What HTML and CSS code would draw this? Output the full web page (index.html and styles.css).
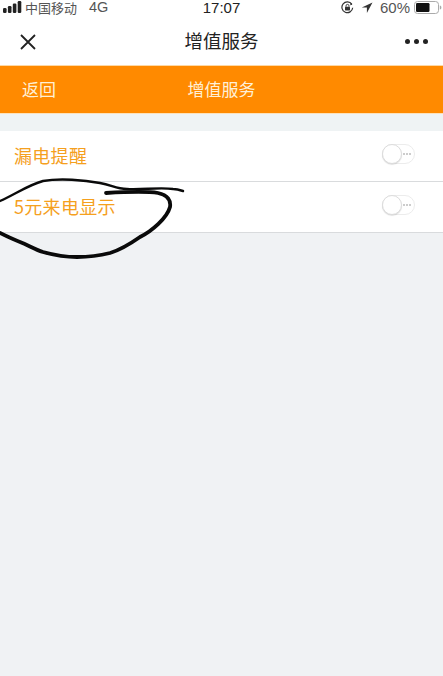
FILE: index.html
```html
<!DOCTYPE html>
<html lang="zh">
<head>
<meta charset="utf-8">
<title>增值服务</title>
<link rel="stylesheet" href="styles.css">
</head>
<body>
<div class="page">
  <div class="status">
    <div class="status-left">
      <svg class="signal" width="19" height="12" viewBox="0 0 19 12"><rect x="0" y="7" width="3.600" height="5" rx="1.200"/><rect x="4.900" y="5" width="3.600" height="7" rx="1.200"/><rect x="9.800" y="2.500" width="3.600" height="9.500" rx="1.200"/><rect x="14.700" y="0" width="3.600" height="12" rx="1.200"/></svg>
      <span class="carrier">中国移动</span>
      <span class="net">4G</span>
    </div>
    <div class="time">17:07</div>
    <div class="status-right">
      <svg class="lock" width="13" height="13" viewBox="0 0 13 13"><path d="M10.800 3.200A5.400 5.400 0 1 0 11.700 6.800" fill="none" stroke="#333" stroke-width="1.200"/><path d="M9.800 1.800l1.600 2-2.300.5z" fill="#333"/><rect x="4" y="5.800" width="5" height="3.600" rx=".6" fill="#333"/><path d="M5 5.800V4.900a1.500 1.500 0 0 1 3 0v.9" fill="none" stroke="#333" stroke-width=".9"/></svg>
      <svg class="arrow" width="12" height="12" viewBox="0 0 12 12"><path d="M11.500.5L.8 5.600h5.100v5.400z" fill="#333"/></svg>
      <span class="pct">60%</span>
      <svg class="battery" width="28" height="13" viewBox="0 0 28 13"><rect x=".5" y=".5" width="24" height="12" rx="3" fill="#fff" stroke="#aaa"/><rect x="2" y="2" width="13.500" height="9" rx="1.200" fill="#111"/><path d="M25.800 4.500v4c1 0 1.600-1 1.600-2s-.6-2-1.600-2z" fill="#aaa"/></svg>
    </div>
  </div>

  <header class="nav">
    <svg class="close" width="18" height="18" viewBox="0 0 18 18"><path d="M2 2l14 14M16 2L2 16" stroke="#222" stroke-width="1.800" fill="none"/></svg>
    <div class="nav-title">增值服务</div>
    <div class="dots"><i></i><i></i><i></i></div>
  </header>

  <div class="banner">
    <span class="back">返回</span>
    <span class="banner-title">增值服务</span>
  </div>

  <div class="gap"></div>

  <div class="row">
    <span class="label">漏电提醒</span>
    <span class="switch"><span class="knob"></span><span class="more"><i></i><i></i><i></i></span></span>
  </div>
  <div class="row">
    <span class="label">5元来电显示</span>
    <span class="switch"><span class="knob"></span><span class="more"><i></i><i></i><i></i></span></span>
  </div>

  <svg class="scribble" width="190" height="85" viewBox="0 0 190 85">
    <path d="M0 24C14 18 28 8 43 4C60 1 84 3 100 6C112 8 116 12 127 12C142 13 160 10 173 12C177 12 180 13 183 14" fill="none" stroke="#0a0a0a" stroke-width="2.400" stroke-linecap="round"/>
    <path d="M106 16C124 15 146 14 158 16C168 18 171 24 170 30C167 41 152 54 140 60C130 67 120 73 110 76C98 79 88 80 77 80C64 80 54 78 43 75C34 72 28 68 20 65C12 62 6 59 0 56" fill="none" stroke="#0a0a0a" stroke-width="3.800" stroke-linecap="round"/>
  </svg>
</div>
</body>
</html>
```
FILE: styles.css
```css
* { box-sizing: border-box; }
html, body { margin: 0; padding: 0; }
body { font-family: "Liberation Sans", "Noto Sans CJK SC", sans-serif; }
.page { position: relative; width: 443px; height: 676px; overflow: hidden; background: #f0f2f4; }
.status { height: 18px; background: #fff; display: flex; align-items: flex-start; justify-content: space-between; padding: 0 0 0 3px; font-size: 14px; line-height: 15px; color: #555; position: relative; }
.status-left { display: flex; align-items: center; }
.signal { fill: #222; margin-right: 3px; margin-top: -1px; }
.carrier { font-family: "Noto Sans CJK SC", sans-serif; font-size: 13px; line-height: 15px; }
.net { margin-left: 12px; font-size: 14.500px; }
.time { position: absolute; left: 0; right: 0; top: 0; text-align: center; font-size: 15px; line-height: 15px; color: #222; }
.status-right { display: flex; align-items: center; }
.lock { margin-right: 7px; }
.arrow { margin-right: 7px; }
.pct { font-size: 15px; margin-right: 4px; }
.battery { margin-right: 1px; }
.nav { height: 47px; background: #fff; display: flex; align-items: center; justify-content: space-between; padding: 0 15px 0 19px; position: relative; }
.close { display: block; }
.nav-title { position: absolute; left: 0; right: 0; margin-bottom: 3px; text-align: center; font-family: "Noto Sans CJK SC", sans-serif; font-size: 18.500px; color: #222; }
.dots { display: flex; gap: 4px; }
.dots i { width: 5px; height: 5px; border-radius: 50%; background: #222; }
.banner { height: 49px; background: #ff8a00; border-top: 1px solid #fdd9a6; border-bottom: 1px solid #fde2bb; display: flex; align-items: center; position: relative; padding: 0 0 2px 22px; color: #fff0d6; font-family: "Noto Sans CJK SC", sans-serif; font-size: 17px; }
.back { display: block; }
.banner-title { position: absolute; left: 0; right: 0; text-align: center; }
.gap { height: 17px; background: #eff3f4; }
.row { height: 51px; background: #fff; border-bottom: 1px solid #d9dbdd; display: flex; align-items: center; justify-content: space-between; padding: 0 28px 2px 14px; }
.label { font-family: "Noto Sans CJK SC", sans-serif; font-size: 18px; color: #f5a01e; letter-spacing: .3px; }
.switch { position: relative; width: 33px; height: 20px; margin-top: -2px; border: 1px solid #ececec; border-radius: 10px; background: #fff; display: block; }
.knob { position: absolute; left: -1px; top: -1px; width: 20px; height: 20px; border-radius: 50%; background: #fff; border: 1px solid #dcdcdc; box-shadow: 0 1px 1px rgba(0,0,0,.12); }
.more { position: absolute; right: 3px; top: 8px; display: flex; gap: 1px; }
.more i { width: 2px; height: 2px; border-radius: 50%; background: #bbb; }
.scribble { position: absolute; left: 0; top: 177px; }
```
